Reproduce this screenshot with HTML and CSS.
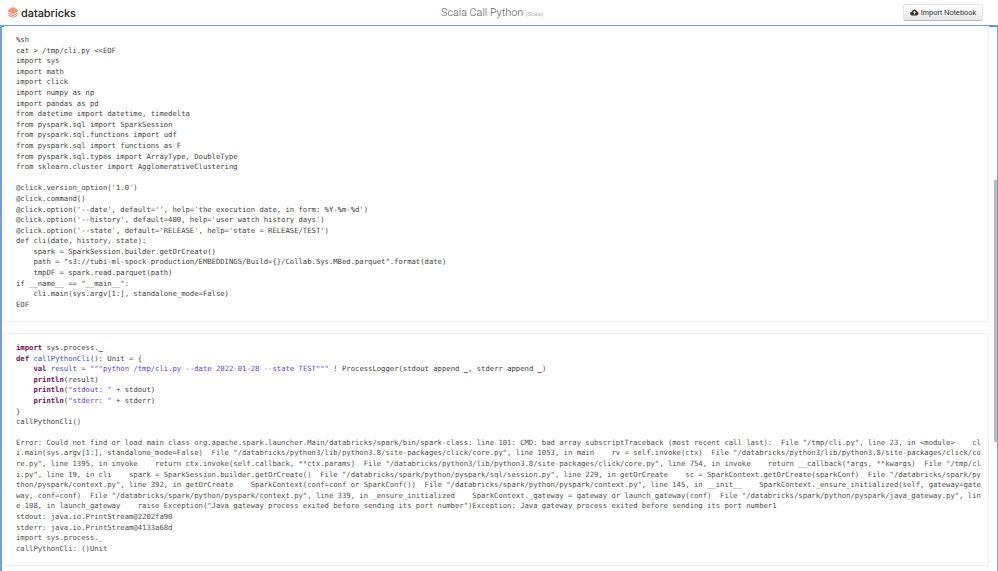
FILE: index.html
```
<!DOCTYPE html>
<html lang="en">
<head>
<meta charset="utf-8">
<title>Scala Call Python</title>
<link rel="stylesheet" href="styles.css">
</head>
<body>
<header class="topbar">
  <div class="brand">
    <svg class="logo" viewBox="0 0 10 11" width="10" height="11" aria-hidden="true">
      <path class="l1" d="M5 0 9.6 2.4 10 4.4 5 7 0 4.4.4 2.4Z"/>
      <path class="l2" d="M0 5.4 5 8l5-2.6v1.2L5 9.2 0 6.6Z"/>
      <path class="l3" d="M.2 7.6 5 10l4.8-2.4-.4 1.4L5 11 .6 9Z"/>
    </svg>
    <span class="wordmark">databricks</span>
  </div>
  <h1 class="title">Scala Call Python <small class="lang">(Scala)</small></h1>
  <button class="import" type="button">
    <svg class="cloud" viewBox="0 0 16 12" width="9" height="7" aria-hidden="true">
      <path d="M4 11.5a3.5 3.5 0 0 1-.6-7A4.6 4.6 0 0 1 12 3.6a4 4 0 0 1 0 7.9ZM8 3 5 6.4h2V9.6h2V6.4h2Z" fill-rule="evenodd"/>
    </svg>
    Import Notebook
  </button>
</header>
<main class="notebook">
  <section class="cell first">
<pre class="code">%sh
cat &gt; /tmp/cli.py &lt;&lt;EOF
import sys
import math
import click
import numpy as np
import pandas as pd
from datetime import datetime, timedelta
from pyspark.sql import SparkSession
from pyspark.sql.functions import udf
from pyspark.sql import functions as F
from pyspark.sql.types import ArrayType, DoubleType
from sklearn.cluster import AgglomerativeClustering

@click.version_option('1.0')
@click.command()
@click.option('--date', default='', help='the execution date, in form: %Y-%m-%d')
@click.option('--history', default=400, help='user watch history days')
@click.option('--state', default='RELEASE', help='state = RELEASE/TEST')
def cli(date, history, state):
    spark = SparkSession.builder.getOrCreate()
    path = "s3://tubi-ml-spock-production/EMBEDDINGS/Build={}/Collab.Sys.MBed.parquet".format(date)
    tmpDF = spark.read.parquet(path)
if __name__ == "__main__":
    cli.main(sys.argv[1:], standalone_mode=False)
EOF</pre>
  </section>
  <section class="cell">
<pre class="code"><span class="kw">import</span> sys.process.<span class="us">_</span>
<span class="kw">def</span> <span class="fn">callPythonCli</span>(): Unit = {
    <span class="kw">val</span> <span class="fn">result</span> = <span class="str">"""python /tmp/cli.py --date 2022-01-28 --state TEST"""</span> ! ProcessLogger(stdout append <span class="us">_</span>, stderr append <span class="us">_</span>)
    <span class="kw">println</span>(result)
    <span class="kw">println</span>(<span class="str">"stdout: "</span> + stdout)
    <span class="kw">println</span>(<span class="str">"stderr: "</span> + stderr)
}
callPythonCli()</pre>
<pre class="output">Error: Could not find or load main class org.apache.spark.launcher.Main/databricks/spark/bin/spark-class: line 101: CMD: bad array subscriptTraceback (most recent call last):  File "/tmp/cli.py", line 23, in &lt;module&gt;    cl
i.main(sys.argv[1:], standalone_mode=False)  File "/databricks/python3/lib/python3.8/site-packages/click/core.py", line 1053, in main    rv = self.invoke(ctx)  File "/databricks/python3/lib/python3.8/site-packages/click/co
re.py", line 1395, in invoke    return ctx.invoke(self.callback, **ctx.params)  File "/databricks/python3/lib/python3.8/site-packages/click/core.py", line 754, in invoke    return __callback(*args, **kwargs)  File "/tmp/cl
i.py", line 19, in cli    spark = SparkSession.builder.getOrCreate()  File "/databricks/spark/python/pyspark/sql/session.py", line 229, in getOrCreate    sc = SparkContext.getOrCreate(sparkConf)  File "/databricks/spark/py
thon/pyspark/context.py", line 392, in getOrCreate    SparkContext(conf=conf or SparkConf())  File "/databricks/spark/python/pyspark/context.py", line 145, in __init__    SparkContext._ensure_initialized(self, gateway=gate
way, conf=conf)  File "/databricks/spark/python/pyspark/context.py", line 339, in _ensure_initialized    SparkContext._gateway = gateway or launch_gateway(conf)  File "/databricks/spark/python/pyspark/java_gateway.py", lin
e 108, in launch_gateway    raise Exception("Java gateway process exited before sending its port number")Exception: Java gateway process exited before sending its port number1
stdout: java.io.PrintStream@2202fa90
stderr: java.io.PrintStream@4133a68d
import sys.process._
callPythonCli: ()Unit</pre>
  </section>
  <div class="scrollthumb"></div>
</main>
</body>
</html>
```
FILE: styles.css
```
* { box-sizing: border-box; }
html, body { height: 100%; margin: 0; }
body {
  display: flex;
  flex-direction: column;
  overflow: hidden;
  background: #fff;
  font-family: "Liberation Sans", Arial, sans-serif;
  text-rendering: geometricPrecision;
}
.topbar {
  flex: none;
  height: 25px;
  display: flex;
  align-items: center;
  justify-content: space-between;
  padding: 0 15px 0 8px;
  position: relative;
}
.brand { display: flex; align-items: center; gap: 3px; }
.logo { display: block; }
.l1 { fill: #f4937c; }
.l2 { fill: #f2846c; }
.l3 { fill: #f4937c; }
.wordmark {
  font-family: Inter, "Liberation Sans", sans-serif;
  font-size: 10.9px;
  font-weight: 500;
  color: #1b1b1b;
}
.title {
  position: absolute;
  left: 441px;
  top: 4px;
  margin: 0;
  font-family: Roboto, "Liberation Sans", sans-serif;
  font-size: 10.8px;
  line-height: 17px;
  font-weight: 300;
  color: #5a5a5a;
  white-space: nowrap;
}
.lang { font-size: 5.8px; color: #8a8a8a; }
.import {
  display: flex;
  align-items: center;
  justify-content: center;
  gap: 2px;
  width: 80px;
  height: 17px;
  margin: 0;
  padding: 0;
  border: 1px solid #e6e6e6;
  border-bottom-color: #bdbdbd;
  border-radius: 2px;
  background: linear-gradient(#ffffff, #e8e8e8);
  font-family: "Liberation Sans", Arial, sans-serif;
  font-size: 7.5px;
  color: #333;
}
.cloud { fill: #333; display: block; }
.notebook {
  position: relative;
  flex: 1;
  min-height: 0;
  overflow: hidden;
  padding: 0 8px 0 2px;
  border-top: 1px solid #6f9fde;
  border-left: 2px solid #6f9fde;
  border-right: 1px solid #6f9fde;
  display: flex;
  flex-direction: column;
  gap: 11px;
}
.notebook::before,
.notebook::after {
  content: "";
  position: absolute;
  top: 0;
  height: 1px;
  background: #4f8ad8;
}
.notebook::before { left: 0; width: 2px; }
.notebook::after { right: 0; width: 8px; }
.cell {
  flex: none;
  padding: 9px 11px 11px;
  border: 1px solid #efefef;
  background: #fff;
}
.cell.first { border-top: 0; height: 296px; padding-top: 9px; }
.code, .output {
  margin: 0;
  font-family: "DejaVu Sans Mono", "Liberation Mono", monospace;
  font-size: 7.23px;
  line-height: 10.6px;
  color: #444;
  white-space: pre;
}
.output { margin-top: 10px; color: #505050; }
.kw { color: #770e56; font-weight: 700; }
.fn { color: #3c4cc4; }
.str { color: #6a3fd0; }
.us { color: #8a1a60; font-weight: 700; }
.scrollthumb {
  position: absolute;
  right: 0;
  top: 154px;
  width: 3px;
  height: 262px;
  background: #bcbcbc;
}
```
